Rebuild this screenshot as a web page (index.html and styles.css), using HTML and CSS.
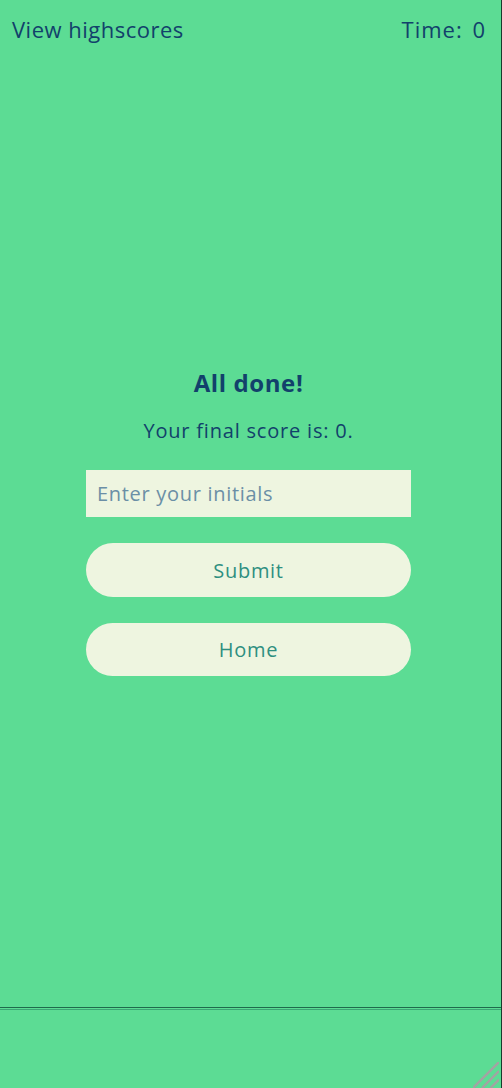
FILE: index.html
```html
<!DOCTYPE html>
<html lang="en">
<head>
<meta charset="utf-8">
<title>Quiz - All done</title>
<link rel="stylesheet" href="styles.css">
</head>
<body>
<div class="page">
  <header class="topbar">
    <a class="highscores" href="#">View highscores</a>
    <span class="timer">Time: 0</span>
  </header>
  <main class="main">
    <section class="done">
      <h1 class="title">All done!</h1>
      <p class="score">Your final score is: 0.</p>
      <input class="initials" type="text" placeholder="Enter your initials">
      <button class="btn" type="button">Submit</button>
      <button class="btn btn-home" type="button">Home</button>
    </section>
  </main>
  <footer class="footer">
    <div class="footer-inner"></div>
    <svg class="grip" width="26" height="26" viewBox="0 0 26 26" aria-hidden="true">
      <path d="M0 26 L26 0 M9 26 L26 9 M17.5 26 L26 17.5" stroke="#a3a3a3" stroke-width="2.4" fill="none"/>
    </svg>
  </footer>
</div>
</body>
</html>
```

FILE: styles.css
```css
html, body {
  margin: 0;
  padding: 0;
}
body {
  background: #5cdc94;
  font-family: "Open Sans", "Noto Sans", sans-serif;
  color: #12416b;
}
.page {
  height: 1088px;
  display: flex;
  flex-direction: column;
  border-right: 1px solid #173d2c;
  box-sizing: border-box;
}
.topbar {
  display: flex;
  justify-content: space-between;
  align-items: center;
  padding: 14px 15px 0 12px;
  font-size: 22px;
  line-height: 30px;
  letter-spacing: 0.5px;
}
.highscores {
  color: #12416b;
  text-decoration: none;
}
.timer {
  letter-spacing: 1px;
  word-spacing: 3px;
}
.main {
  flex: 1;
  display: flex;
  justify-content: center;
  padding-top: 323px;
  padding-right: 4px;
}
.done {
  width: 325px;
  display: flex;
  flex-direction: column;
  align-items: stretch;
}
.title {
  margin: 0;
  text-align: center;
  font-size: 24px;
  font-weight: 700;
  line-height: 32px;
  letter-spacing: 0.6px;
}
.score {
  margin: 18px 0 0;
  text-align: center;
  font-size: 20px;
  line-height: 28px;
  letter-spacing: 0.8px;
}
.initials {
  margin-top: 25px;
  height: 47px;
  box-sizing: border-box;
  border: none;
  background: #eef5e0;
  padding: 0 11px;
  font-family: inherit;
  font-size: 20px;
  letter-spacing: 0.7px;
  color: #12416b;
  outline: none;
}
.initials::placeholder {
  color: #6b8fa6;
}
.btn {
  margin-top: 26px;
  height: 54px;
  border: none;
  border-radius: 27px;
  background: #eef5e0;
  color: #2e8f80;
  font-family: inherit;
  font-size: 20px;
  letter-spacing: 0.7px;
  cursor: pointer;
}
.btn-home {
  height: 53px;
}
.footer {
  position: relative;
  height: 81px;
  box-sizing: border-box;
  border-top: 1px solid #1f6b4c;
  padding-top: 1px;
}
.footer-inner {
  height: 79px;
  border-top: 1px solid #3aa874;
}
.grip {
  position: absolute;
  right: 2px;
  bottom: 0;
}
```
